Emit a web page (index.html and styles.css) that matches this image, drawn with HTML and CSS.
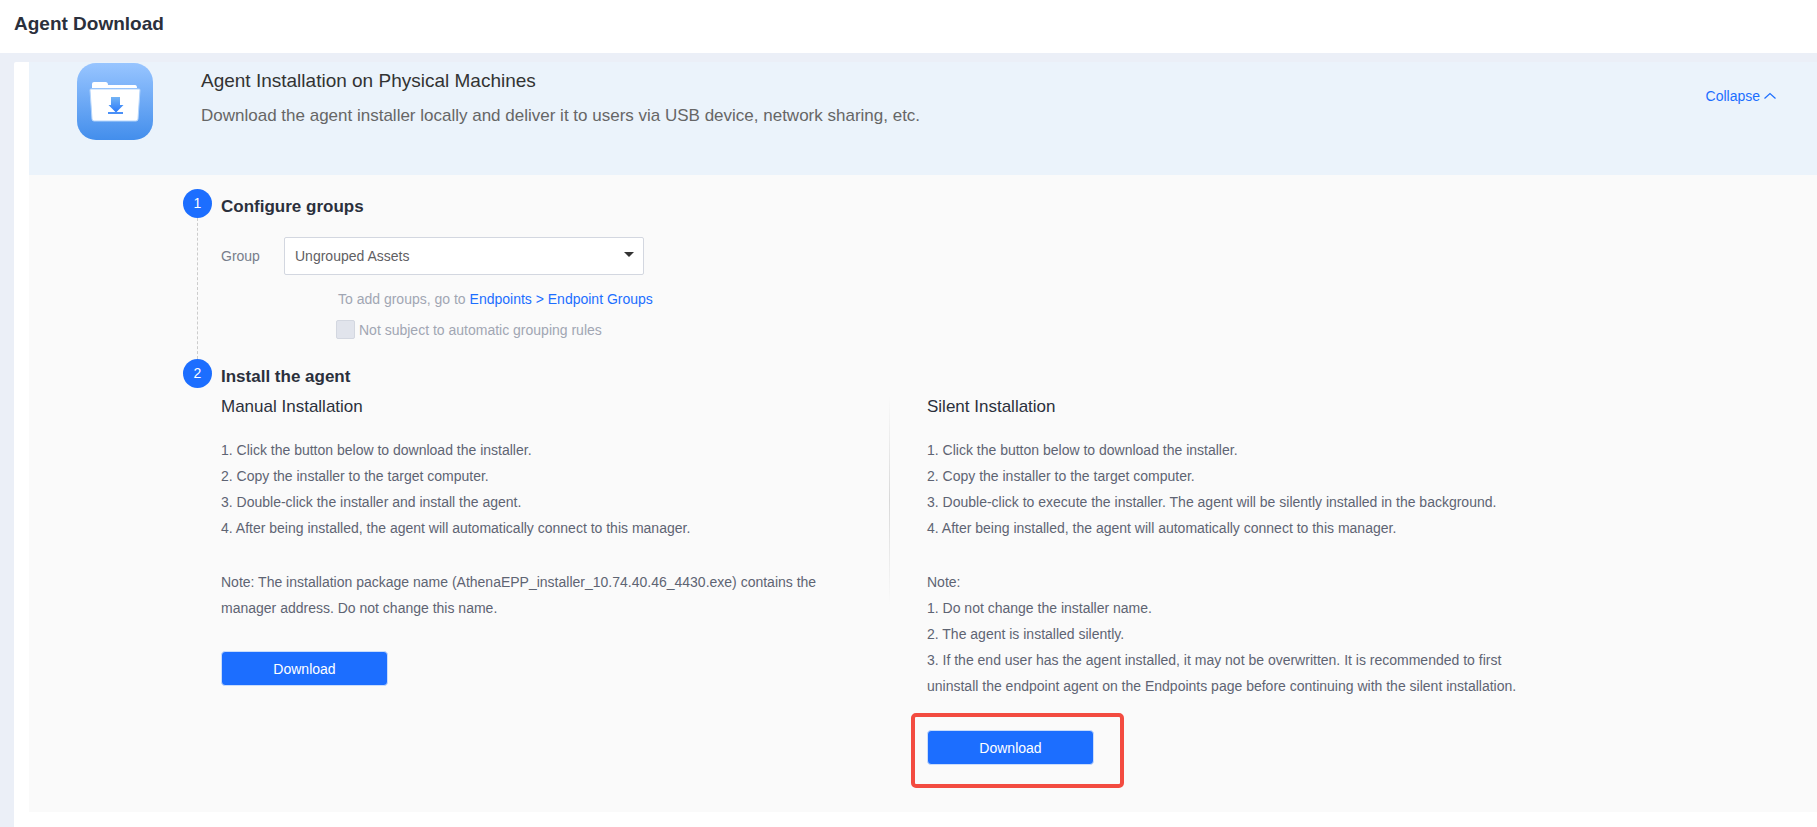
FILE: index.html
```html
<!DOCTYPE html>
<html lang="en">
    <head>
        <title>Agent Download</title>
        <meta charset="UTF-8">
        <meta name="viewport" content="width=device-width, initial-scale=1.0">
        <link rel="stylesheet" href="styles.css">
    </head>
    <body>
        <header class="page-header">
            <h1>Agent Download</h1>
        </header>

        <main class="panel">
            <section class="banner">
                <svg class="banner-icon" viewBox="0 0 76 77" aria-hidden="true">
                    <defs>
                        <linearGradient id="tile" x1="0" y1="0" x2="0" y2="1">
                            <stop offset="0" stop-color="#98c5ff"/>
                            <stop offset="1" stop-color="#438eec"/>
                        </linearGradient>
                        <linearGradient id="arrow" x1="0" y1="0" x2="0" y2="1">
                            <stop offset="0" stop-color="#74b4f5"/>
                            <stop offset="1" stop-color="#2878fa"/>
                        </linearGradient>
                    </defs>
                    <rect width="76" height="77" rx="19" fill="url(#tile)"/>
                    <path d="M15 25v-4q0-2 2-2h11.500q2.500 0 2.500 3h27q2 0 2 3z" fill="#fff"/>
                    <path d="M14 26h48q1 0 1 1l-2 29q0 2-2 2H17q-2 0-2-2l-2-29q0-1 1-1z" fill="#fff" stroke="#b4d5fc" stroke-width="1"/>
                    <path d="M34 34h9v8h3.500l-7.500 7.500-7.500-7.500h2.500z" fill="url(#arrow)"/>
                    <rect x="31" y="49" width="15" height="2" fill="#4a90f7"/>
                </svg>
                <div class="banner-text">
                    <h2>Agent Installation on Physical Machines</h2>
                    <p>Download the agent installer locally and deliver it to users via USB device, network sharing, etc.</p>
                </div>
                <a class="collapse" href="#steps">Collapse
                    <svg width="12" height="8" viewBox="0 0 12 8" aria-hidden="true"><path d="M0.5 6.5L6 1.5l5.5 5" fill="none" stroke="currentColor" stroke-width="1.2"/></svg>
                </a>
            </section>

            <div class="steps" id="steps">
                <section class="step step-group">
                    <div class="marker"><span class="number">1</span></div>
                    <div class="step-body">
                        <h3>Configure groups</h3>
                        <div class="field">
                            <label for="group">Group</label>
                            <div class="select-box">
                                <select id="group" name="group">
                                    <option>Ungrouped Assets</option>
                                </select>
                                <svg class="caret" width="10" height="5" viewBox="0 0 10 5" aria-hidden="true"><path d="M0 0h10L5 5z" fill="#333"/></svg>
                            </div>
                        </div>
                        <p class="hint">To add groups, go to <a href="#endpoints">Endpoints &gt; Endpoint Groups</a></p>
                        <div class="rule">
                            <input type="checkbox" id="noRules" name="noRules" disabled>
                            <label for="noRules">Not subject to automatic grouping rules</label>
                        </div>
                    </div>
                </section>

                <section class="step">
                    <div class="marker"><span class="number">2</span></div>
                    <div class="step-body">
                        <h3>Install the agent</h3>
                        <div class="methods">
                            <div class="method">
                                <h4>Manual Installation</h4>
                                <p>
                                    1. Click the button below to download the installer.<br>
                                    2. Copy the installer to the target computer.<br>
                                    3. Double-click the installer and install the agent.<br>
                                    4. After being installed, the agent will automatically connect to this manager.
                                </p>
                                <p>Note: The installation package name (AthenaEPP_installer_10.74.40.46_4430.exe) contains the manager address. Do not change this name.</p>
                                <button type="button" class="download">Download</button>
                            </div>
                            <div class="divider"></div>
                            <div class="method">
                                <h4>Silent Installation</h4>
                                <p>
                                    1. Click the button below to download the installer.<br>
                                    2. Copy the installer to the target computer.<br>
                                    3. Double-click to execute the installer. The agent will be silently installed in the background.<br>
                                    4. After being installed, the agent will automatically connect to this manager.
                                </p>
                                <p>
                                    Note:<br>
                                    1. Do not change the installer name.<br>
                                    2. The agent is installed silently.<br>
                                    3. If the end user has the agent installed, it may not be overwritten. It is recommended to first uninstall the endpoint agent on the Endpoints page before continuing with the silent installation.
                                </p>
                                <div class="highlight">
                                    <button type="button" class="download">Download</button>
                                </div>
                            </div>
                        </div>
                    </div>
                </section>
            </div>
        </main>
    </body>
</html>
```
FILE: styles.css
```css
* {
    box-sizing: border-box;
}
body {
    margin: 0;
    min-height: 100vh;
    display: flex;
    flex-direction: column;
    background-color: #ebeff7;
    color: #5e6473;
    font-family: "Liberation Sans", Arial, sans-serif;
    font-size: 14px;
}
h1, h2, h3, h4, p {
    margin: 0;
}
h1, h3, h4 {
    color: #2b303c;
}
a {
    color: #1c6eff;
    text-decoration: none;
}
a:hover {
    text-decoration: underline;
}
.page-header {
    height: 53px;
    padding: 12px 14px;
    background-color: #fff;
}
h1 {
    font-size: 19px;
    line-height: 24px;
}
.panel {
    flex: 1;
    margin: 9px 0 0 14px;
    padding: 0 0 15px 15px;
    background-color: #fff;
    border-top-left-radius: 2px;
}
.banner {
    display: flex;
    min-height: 113px;
    padding: 1px 41px 0 48px;
    background-color: #ebf3fb;
}
.banner-icon {
    width: 76px;
    height: 77px;
}
.banner-text {
    flex: 1;
    padding: 6px 0 0 48px;
}
h2 {
    color: #333;
    font-size: 19px;
    font-weight: normal;
    line-height: 24px;
}
.banner-text p {
    margin-top: 11px;
    color: #666;
    font-size: 17px;
    line-height: 24px;
}
.collapse {
    display: flex;
    align-items: center;
    gap: 4px;
    height: 20px;
    margin-top: 23px;
}
.steps {
    padding: 14px 0 0 154px;
    min-height: 637px;
    background-color: #fafafa;
}
.step {
    display: flex;
    gap: 9px;
}
.step-group {
    min-height: 170px;
}
.marker {
    display: flex;
    flex-direction: column;
    align-items: center;
}
.step-group .marker::after {
    content: "";
    flex: 1;
    border-left: 1px dashed #ccc;
}
.number {
    width: 29px;
    height: 29px;
    border-radius: 50%;
    background-color: #1c6eff;
    color: #fff;
    line-height: 28px;
    text-align: center;
}
.step-body {
    flex: 1;
}
h3 {
    padding-top: 6px;
    font-size: 17px;
    line-height: 24px;
}
.field {
    display: flex;
    align-items: center;
    margin-top: 18px;
}
.field label {
    width: 63px;
    color: #777d8b;
}
.select-box {
    position: relative;
    width: 360px;
}
select {
    appearance: none;
    width: 100%;
    height: 38px;
    padding: 0 10px;
    border: 1px solid #d3d7e0;
    border-radius: 2px;
    background-color: #fff;
    color: #5f6063;
    font: inherit;
}
.caret {
    position: absolute;
    top: 15px;
    right: 10px;
}
.hint {
    margin: 14px 0 0 117px;
    color: #a1a6b3;
    line-height: 20px;
}
.rule {
    display: flex;
    align-items: center;
    gap: 4px;
    margin: 11px 0 0 115px;
    color: #a1a6b3;
}
.rule input {
    appearance: none;
    width: 19px;
    height: 19px;
    margin: 0;
    border: 1px solid #d3d7e0;
    border-radius: 2px;
    background-color: #e1e4ec;
}
.methods {
    display: grid;
    grid-template-columns: minmax(0, 631px) 1px minmax(0, 620px);
    column-gap: 37px;
    padding-top: 6px;
}
.divider {
    height: 210px;
    background: linear-gradient(#fafafa, #d8d8d8, #fafafa);
}
h4 {
    margin-bottom: 18px;
    font-size: 17px;
    font-weight: normal;
    line-height: 24px;
}
.method p {
    margin-bottom: 28px;
    line-height: 26px;
}
.download {
    display: block;
    width: 167px;
    height: 35px;
    margin-top: 30px;
    border: 1px solid #c9dcfb;
    border-radius: 4px;
    background-color: #1c6eff;
    color: #fff;
    font: inherit;
}
.highlight {
    width: 213px;
    margin: -14px 0 0 -16px;
    padding: 13px 12px 19px;
    border: 4px solid #f34b40;
    border-radius: 5px;
}
.highlight .download {
    margin-top: 0;
}
```
